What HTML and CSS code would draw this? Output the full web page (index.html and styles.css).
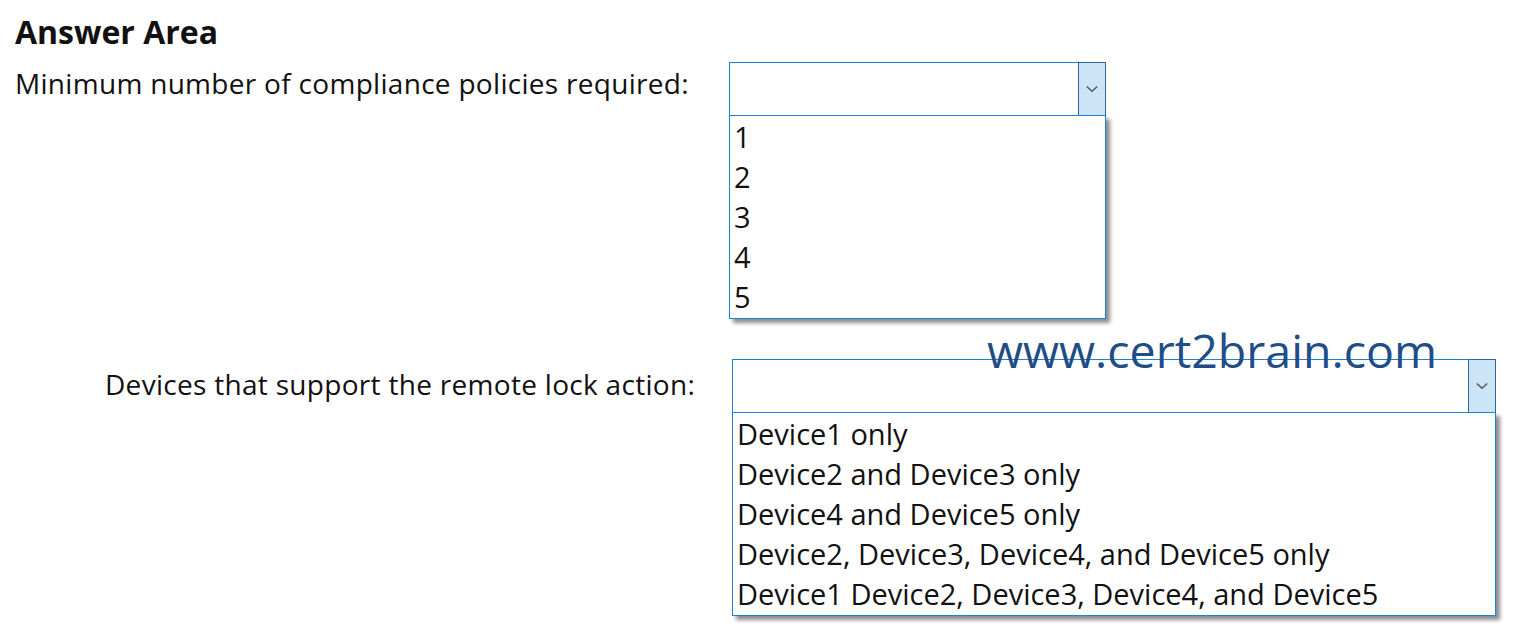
FILE: index.html
```html
<!DOCTYPE html>
<html>
<head>
<meta charset="utf-8">
<link rel="stylesheet" href="styles.css">
</head>
<body>
<div class="page">
  <h1 class="title">Answer Area</h1>
  <div class="row row-one">
    <div class="label label-one">Minimum number of compliance policies required:</div>
    <div class="dropdown dd-one">
      <div class="select">
        <div class="field"></div>
        <div class="button"><svg width="12" height="8" viewBox="0 0 12 8"><path d="M0.8 1.5 L6 6.2 L11.2 1.5" fill="none" stroke="#555555" stroke-width="1.5"/></svg></div>
      </div>
      <ul class="list">
        <li>1</li>
        <li>2</li>
        <li>3</li>
        <li>4</li>
        <li>5</li>
      </ul>
    </div>
  </div>
  <div class="row row-two">
    <div class="label label-two">Devices that support the remote lock action:</div>
    <div class="dropdown dd-two">
      <div class="select">
        <div class="field"></div>
        <div class="button"><svg width="12" height="8" viewBox="0 0 12 8"><path d="M0.8 1.5 L6 6.2 L11.2 1.5" fill="none" stroke="#555555" stroke-width="1.5"/></svg></div>
      </div>
      <ul class="list">
        <li>Device1 only</li>
        <li>Device2 and Device3 only</li>
        <li>Device4 and Device5 only</li>
        <li>Device2, Device3, Device4, and Device5 only</li>
        <li>Device1 Device2, Device3, Device4, and Device5</li>
      </ul>
    </div>
  </div>
  <div class="watermark">www.cert2brain.com</div>
</div>
</body>
</html>
```

FILE: styles.css
```css
html, body {
  margin: 0;
  padding: 0;
  background: #ffffff;
}
body {
  font-family: "Open Sans", "Noto Sans", sans-serif;
  color: #111111;
}
.page {
  position: relative;
  width: 1519px;
  height: 640px;
  padding: 0 15px;
  box-sizing: border-box;
}
.title {
  margin: 0;
  padding-top: 15px;
  font-size: 32px;
  line-height: 34px;
  font-weight: 700;
  color: #111111;
}
.row {
  display: flex;
  align-items: flex-start;
}
.row-one {
  margin-top: 13px;
}
.row-two {
  margin-top: 40px;
}
.label {
  font-size: 28px;
  line-height: 42px;
  letter-spacing: 0.3px;
  box-sizing: border-box;
  white-space: nowrap;
}
.label-one {
  width: 714px;
}
.label-two {
  width: 717px;
  padding-left: 90px;
  padding-top: 4px;
}
.dropdown {
  display: flex;
  flex-direction: column;
}
.dd-one {
  width: 377px;
}
.dd-two {
  width: 764px;
}
.select {
  display: flex;
  height: 54px;
  box-sizing: border-box;
  border: 1px solid #1a83d6;
  background: #ffffff;
}
.field {
  flex: 1;
}
.button {
  width: 28px;
  margin: -1px -1px -1px 0;
  box-sizing: border-box;
  background: #cce4f7;
  border: 1px solid #2f6696;
  display: flex;
  align-items: center;
  justify-content: center;
}
.list {
  list-style: none;
  margin: -1px 0 0 0;
  padding: 1px 0 1px 0;
  border: 1px solid #1a83d6;
  background: #ffffff;
  box-shadow: 4px 4px 4px rgba(0, 0, 0, 0.45);
}
.list li {
  height: 40px;
  line-height: 40px;
  font-size: 29px;
  padding-left: 4px;
  white-space: nowrap;
}
.watermark {
  position: absolute;
  left: 987px;
  top: 320px;
  font-size: 46.5px;
  line-height: 60px;
  color: #1f4d86;
  white-space: nowrap;
}
```
